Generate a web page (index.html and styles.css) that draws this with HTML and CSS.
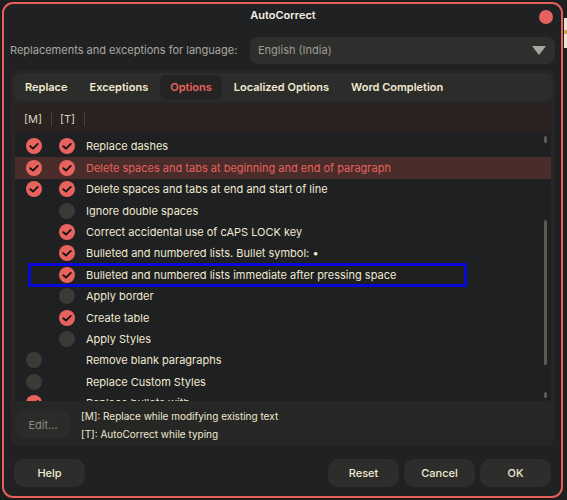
FILE: index.html
```html
<!DOCTYPE html>
<html>
<head>
<meta charset="utf-8">
<link rel="stylesheet" href="styles.css">
</head>
<body>
<div class="window">
  <div class="titlebar">
    <span class="title">AutoCorrect</span>
    <span class="close"></span>
  </div>
  <div class="langrow">
    <span class="langlabel">Replacements and exceptions for language:</span>
    <div class="select">
      <span>English (India)</span>
      <svg class="caret" width="14" height="9" viewBox="0 0 14 9"><path d="M0 0H14L7 9Z" fill="#a8a69c"/></svg>
    </div>
  </div>
  <div class="panel">
    <div class="tabs">
      <span class="tab">Replace</span>
      <span class="tab">Exceptions</span>
      <span class="tab active">Options</span>
      <span class="tab">Localized Options</span>
      <span class="tab">Word Completion</span>
    </div>
    <div class="listhead">
      <span class="hm">[M]</span><i class="sep"></i><span class="ht">[T]</span><i class="sep"></i>
    </div>
    <div class="list">
      <div class="rows">
        <div class="row"><span class="cb on"></span><span class="cb on"></span><span class="lbl"></span></div>
        <div class="row"><span class="cb on"></span><span class="cb on"></span><span class="lbl">Replace dashes</span></div>
        <div class="row sel"><span class="cb on"></span><span class="cb on"></span><span class="lbl">Delete spaces and tabs at beginning and end of paragraph</span></div>
        <div class="row"><span class="cb on"></span><span class="cb on"></span><span class="lbl">Delete spaces and tabs at end and start of line</span></div>
        <div class="row"><span class="cb none"></span><span class="cb off"></span><span class="lbl">Ignore double spaces</span></div>
        <div class="row"><span class="cb none"></span><span class="cb on"></span><span class="lbl">Correct accidental use of cAPS LOCK key</span></div>
        <div class="row"><span class="cb none"></span><span class="cb on"></span><span class="lbl">Bulleted and numbered lists. Bullet symbol: •</span></div>
        <div class="row marked"><span class="cb none"></span><span class="cb on"></span><span class="lbl">Bulleted and numbered lists immediate after pressing space</span><span class="mark"></span></div>
        <div class="row"><span class="cb none"></span><span class="cb off"></span><span class="lbl">Apply border</span></div>
        <div class="row"><span class="cb none"></span><span class="cb on"></span><span class="lbl">Create table</span></div>
        <div class="row"><span class="cb none"></span><span class="cb off"></span><span class="lbl">Apply Styles</span></div>
        <div class="row"><span class="cb off"></span><span class="cb none"></span><span class="lbl">Remove blank paragraphs</span></div>
        <div class="row"><span class="cb off"></span><span class="cb none"></span><span class="lbl">Replace Custom Styles</span></div>
        <div class="row"><span class="cb on"></span><span class="cb none"></span><span class="lbl">Replace bullets with: •</span></div>
      </div>
      <div class="scrollbar">
        <span class="thumb small"></span>
        <span class="thumb long"></span>
        <span class="thumb small2"></span>
      </div>
    </div>
    <div class="panelfoot">
      <button class="btn edit">Edit...</button>
      <div class="legend">
        <div>[M]: Replace while modifying existing text</div>
        <div>[T]: AutoCorrect while typing</div>
      </div>
    </div>
  </div>
  <div class="buttons">
    <button class="btn">Help</button>
    <span class="spacer"></span>
    <button class="btn">Reset</button>
    <button class="btn">Cancel</button>
    <button class="btn">OK</button>
  </div>
</div>
<div class="edge"></div>
</body>
</html>
```

FILE: styles.css
```css
html, body {
  margin: 0;
  padding: 0;
  background: #1c1e1f;
  width: 567px;
  height: 500px;
  overflow: hidden;
  font-family: Inter, "Noto Sans", sans-serif;
  color: #f1e9d1;
}

.window {
  position: relative;
  box-sizing: border-box;
  margin: 2px 0 0 2px;
  width: 561px;
  height: 496px;
  border: 2px solid #e45f5a;
  border-radius: 11px;
  background: #1f2122;
  display: flex;
  flex-direction: column;
  padding: 0 6px 0 7px;
}

.edge {
  position: absolute;
  left: 564px;
  top: 18px;
  width: 3px;
  height: 30px;
  background: linear-gradient(#e8e4d8 0 40%, #c9a548 40% 55%, #e8e4d8 55%);
}

.titlebar {
  height: 30px;
  display: flex;
  align-items: flex-start;
  justify-content: center;
  position: relative;
}

.title {
  font-size: 11px;
  font-weight: 600;
  color: #f4efe4;
  margin-top: 4px;
}

.close {
  position: absolute;
  right: 2px;
  top: 6px;
  width: 14px;
  height: 14px;
  border-radius: 50%;
  background: #e6625e;
}

.langrow {
  display: flex;
  align-items: center;
  height: 28px;
  margin-top: 2px;
}

.langlabel {
  font-size: 11px;
  color: #aaa89f;
  margin-left: -1px;
  width: 240px;
}

.select {
  flex: 1;
  height: 27px;
  border-radius: 8px;
  background: #2e2f2c;
  display: flex;
  align-items: center;
  justify-content: space-between;
  padding: 0 9px 0 8px;
  font-size: 11px;
  color: #9d9b92;
}

.caret {
  margin-top: 1px;
}

.panel {
  margin-top: 6px;
  height: 376px;
  box-sizing: border-box;
  background: #262725;
  border-radius: 8px;
  padding: 3px 2px 0 2px;
  display: flex;
  flex-direction: column;
}

.tabs {
  height: 28px;
  background: #2c2d2b;
  border-radius: 8px;
  display: flex;
  align-items: center;
  padding-left: 1px;
}

.tab {
  font-size: 11px;
  font-weight: 600;
  color: #f1e9d1;
  padding: 0 10px;
  margin: 0 1px;
  height: 25px;
  line-height: 24px;
  border-radius: 7px;
}

.tab.active {
  background: #232322;
  color: #e9635e;
}

.listhead {
  margin: 4px 2px 0 2px;
  height: 28px;
  background: #2a2221;
  display: flex;
  align-items: center;
  font-size: 11px;
  color: #d9d2c0;
}

.hm { margin-left: 9px; }
.ht { margin-left: 8px; }

.sep {
  display: inline-block;
  width: 1px;
  height: 14px;
  background: #46403e;
  margin-left: 9px;
}

.list {
  position: relative;
  margin: 0 2px;
  height: 268px;
  background: #1e2021;
  overflow: hidden;
}

.rows {
  margin-top: -18.6px;
}

.row {
  position: relative;
  height: 21.4px;
  display: flex;
  align-items: center;
  padding-left: 11px;
}

.row.sel {
  background: #4a2c2b;
}

.row.sel .lbl {
  color: #e5625d;
}

.cb {
  width: 16px;
  height: 16px;
  border-radius: 50%;
  flex: none;
  box-sizing: border-box;
}

.cb + .cb {
  margin-left: 17px;
}

.cb.on {
  background: #e8625e url("data:image/svg+xml;utf8,<svg xmlns='http://www.w3.org/2000/svg' width='16' height='16' viewBox='0 0 16 16'><path d='M4.3 8.2 L7 10.6 L11.8 5.9' fill='none' stroke='%23151515' stroke-width='1.9' stroke-linecap='round' stroke-linejoin='round'/></svg>") center/16px 16px no-repeat;
}

.cb.off {
  background: #3a3a37;
}

.lbl {
  margin-left: 11px;
  font-size: 11px;
  white-space: nowrap;
}

.mark {
  position: absolute;
  left: 13px;
  top: -1px;
  width: 439px;
  height: 24px;
  box-sizing: border-box;
  border: 3px solid #0a0ad8;
}

.scrollbar {
  position: absolute;
  top: 0;
  right: 4px;
  width: 3px;
  height: 100%;
}

.thumb {
  position: absolute;
  left: 0;
  width: 3px;
  border-radius: 2px;
  background: #5c5b52;
}

.thumb.small { top: 3px; height: 7px; }
.thumb.long { top: 87px; height: 145px; }
.thumb.small2 { top: 259px; height: 6px; }

.panelfoot {
  display: flex;
  align-items: center;
  padding: 0 0 0 2px;
  flex: 1;
}

.btn {
  font-family: Inter, "Noto Sans", sans-serif;
  border: none;
  background: #2d2e2b;
  color: #f1e9d1;
  font-size: 11px;
  font-weight: 500;
  border-radius: 10px;
  height: 28px;
  width: 71px;
  padding: 0;
}

.btn.edit {
  width: 56px;
  height: 27px;
  color: #8d8b84;
  font-weight: 400;
  margin-top: 2px;
  border-radius: 9px;
  background: #2b2c2a;
}

.legend {
  margin-left: 10px;
  font-size: 10px;
  line-height: 18px;
  color: #efe7cf;
  margin-top: 3px;
}

.buttons {
  display: flex;
  margin-top: 13px;
  gap: 5px;
  padding-left: 3px;
  padding-right: 4px;
}

.spacer { flex: 1; }
```
